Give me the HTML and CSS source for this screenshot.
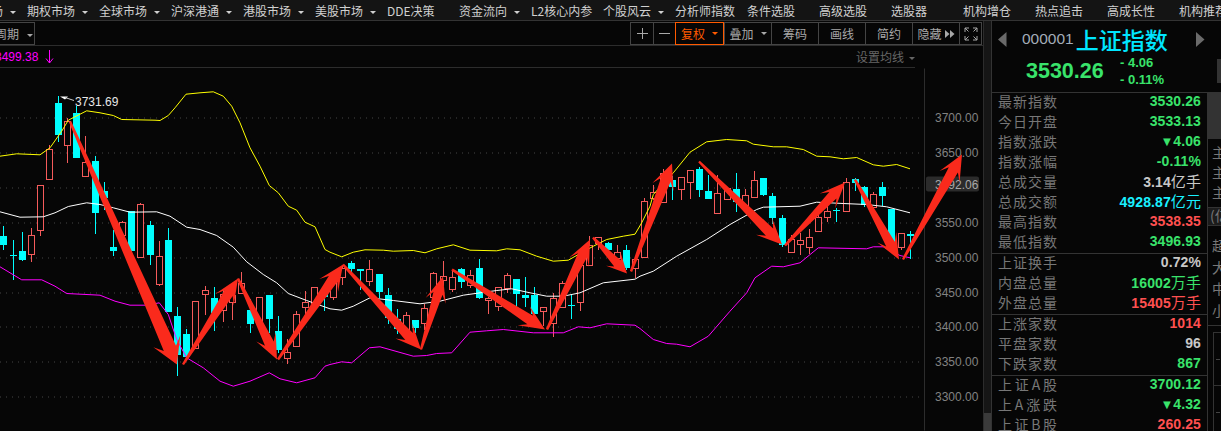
FILE: index.html
```html
<html>
<head>
  <title>上证指数</title>
  <link rel="stylesheet" href="styles.css">
</head>
<body>
  <nav class="topnav">
    <a class="nav-item">期货市场<i class="caret"></i></a>
    <a class="nav-item">期权市场<i class="caret"></i></a>
    <a class="nav-item">全球市场<i class="caret"></i></a>
    <a class="nav-item">沪深港通<i class="caret"></i></a>
    <a class="nav-item">港股市场<i class="caret"></i></a>
    <a class="nav-item">美股市场<i class="caret"></i></a>
    <a class="nav-item">DDE决策</a>
    <a class="nav-item">资金流向<i class="caret"></i></a>
    <a class="nav-item">L2核心内参</a>
    <a class="nav-item">个股风云<i class="caret"></i></a>
    <a class="nav-item">分析师指数</a>
    <a class="nav-item">条件选股</a>
    <a class="nav-item">高级选股</a>
    <a class="nav-item">选股器</a>
    <a class="nav-item">机构增仓</a>
    <a class="nav-item">热点追击</a>
    <a class="nav-item">高成长性</a>
    <a class="nav-item">机构推荐</a>
  </nav>

  <div class="main">
    <section class="chart-col">
      <div class="toolbar">
        <div class="period-btn">周期<i class="caret"></i></div>
        <div class="tool-group">
          <div class="tool tool-sm"><svg width="13" height="13" viewBox="0 0 13 13"><path d="M6.5 1v11M1 6.5h11" stroke="#a8a8a8" fill="none"/></svg></div>
          <div class="tool tool-sm"><svg width="13" height="13" viewBox="0 0 13 13"><path d="M1 6.5h11" stroke="#a8a8a8" fill="none"/></svg></div>
          <div class="tool tool-on">复权<i class="caret"></i></div>
          <div class="tool">叠加<i class="caret"></i></div>
          <div class="tool">筹码</div>
          <div class="tool">画线</div>
          <div class="tool">简约</div>
          <div class="tool">隐藏<svg class="tool-more" width="10" height="8" viewBox="0 0 10 8"><path d="M0 0l4.5 4L0 8zM5 0l4.5 4L5 8z" fill="#a8a8a8"/></svg></div>
          <div class="tool tool-fs"><svg width="14" height="14" viewBox="0 0 14 14"><path d="M1 5V1h4M9 1h4v4M13 9v4H9M5 13H1V9M1 1l3.500 3.500M13 1L9.500 4.500M13 13L9.500 9.500M1 13l3.500-3.500" stroke="#a8a8a8" fill="none"/></svg></div>
        </div>
      </div>
      <div class="info-row">
        <span class="ma-value">3499.38</span>
        <svg class="ma-arrow" width="9" height="14" viewBox="0 0 9 14"><path d="M4.500 0v13M1 8.500l3.500 4.500 3.500-4.500" stroke="#ff00ff" fill="none"/></svg>
        <span class="ma-set">设置均线<i class="caret"></i></span>
      </div>
      <svg id="chart" class="chart" viewBox="0 69 983 362"></svg>
    </section>

    <div class="scroll-track"><div class="scroll-thumb"></div></div>

    <section class="quote">
      <header class="quote-head">
        <div class="head-line">
          <svg class="head-arrow" width="9" height="15" viewBox="0 0 9 15"><path d="M8.500 0v15L0 7.500z" fill="#6a6a6a"/></svg>
          <span class="code">000001</span>
          <span class="name">上证指数</span>
          <svg class="head-arrow head-next" width="9" height="15" viewBox="0 0 9 15"><path d="M0 0v15l8.500-7.500z" fill="#6a6a6a"/></svg>
        </div>
        <div class="head-line2">
          <span class="price">3530.26</span>
          <div class="change">
            <span>- 4.06</span>
            <span>- 0.11%</span>
          </div>
        </div>
        <div class="head-thumb"></div>
      </header>

      <div class="quote-body">
        <div class="quote-table">
          <div class="group">
            <div class="row"><span class="lbl">最新指数</span><b class="green">3530.26</b></div>
            <div class="row"><span class="lbl">今日开盘</span><b class="green">3533.13</b></div>
            <div class="row"><span class="lbl">指数涨跌</span><b class="green"><small>▼</small>4.06</b></div>
            <div class="row"><span class="lbl">指数涨幅</span><b class="green">-0.11%</b></div>
            <div class="row"><span class="lbl">总成交量</span><b class="grey">3.14<em>亿手</em></b></div>
            <div class="row"><span class="lbl">总成交额</span><b class="cyan">4928.87<em>亿元</em></b></div>
            <div class="row"><span class="lbl">最高指数</span><b class="red">3538.35</b></div>
            <div class="row"><span class="lbl">最低指数</span><b class="green">3496.93</b></div>
          </div>
          <div class="group">
            <div class="row"><span class="lbl">上证换手</span><b class="grey">0.72%</b></div>
            <div class="row"><span class="lbl">内盘总量</span><b class="green">16002<em>万手</em></b></div>
            <div class="row"><span class="lbl">外盘总量</span><b class="red">15405<em>万手</em></b></div>
          </div>
          <div class="group">
            <div class="row"><span class="lbl">上涨家数</span><b class="red">1014</b></div>
            <div class="row"><span class="lbl">平盘家数</span><b class="grey">96</b></div>
            <div class="row"><span class="lbl">下跌家数</span><b class="green">867</b></div>
          </div>
          <div class="group">
            <div class="row"><span class="lbl">上证A股</span><b class="green">3700.12</b></div>
            <div class="row"><span class="lbl">上A涨跌</span><b class="green"><small>▼</small>4.32</b></div>
            <div class="row"><span class="lbl">上证B股</span><b class="red">260.25</b></div>
          </div>
        </div>

        <aside class="side">
          <div class="side-top"></div>
          <div class="side-list side-main">
            <span>主</span><span>主</span><span>主</span>
          </div>
          <div class="side-unit">(亿</div>
          <div class="side-list side-size">
            <span>超</span><span>大</span><span>中</span><span>小</span>
          </div>
          <div class="side-box">
            <div class="side-cell"><i></i></div>
            <div class="side-cell"><i></i></div>
          </div>
        </aside>
      </div>
    </section>
  </div>

  <script src="chart.js"></script>
</body>
</html>
```

FILE: styles.css
```css
html, body {
  margin: 0;
  padding: 0;
}

body {
  width: 1221px;
  height: 431px;
  overflow: hidden;
  background-color: #060606;
  color: #a8a8a8;
  font-family: "Noto Sans CJK SC", "Liberation Sans", sans-serif;
  font-size: 12px;
  display: flex;
  flex-direction: column;
}

.caret {
  display: inline-block;
  width: 0;
  height: 0;
  border-left: 3px solid transparent;
  border-right: 3px solid transparent;
  border-top: 3px solid currentColor;
  margin-left: 7px;
  vertical-align: 2px;
}

.topnav {
  display: flex;
  flex: none;
  height: 20px;
  margin-left: -45px;
  background-color: #141414;
  border-bottom: 1px solid #333;
  white-space: nowrap;
}

.nav-item {
  flex: none;
  width: 72px;
  line-height: 22px;
  color: #d0d0d0;
}

.main {
  flex: 1;
  display: flex;
  min-height: 0;
}

.chart-col {
  flex: none;
  width: 983px;
  display: flex;
  flex-direction: column;
  overflow: hidden;
}

.toolbar {
  flex: none;
  height: 25px;
  box-sizing: border-box;
  display: flex;
  justify-content: space-between;
  align-items: flex-start;
  padding-top: 1px;
  border-bottom: 1px solid #2c2c2c;
}

.period-btn {
  width: 40px;
  height: 23px;
  margin-left: -5px;
  box-sizing: border-box;
  border: 1px solid #444;
  border-left: none;
  line-height: 22px;
  white-space: nowrap;
}

.period-btn .caret {
  margin-left: 8px;
}

.tool-group {
  display: flex;
  height: 23px;
  margin-right: 1px;
  box-sizing: border-box;
  border: 1px solid #444;
}

.tool {
  width: 47px;
  box-sizing: border-box;
  border-left: 1px solid #444;
  display: flex;
  align-items: center;
  justify-content: center;
  white-space: nowrap;
}

.tool:first-child {
  border-left: none;
}

.tool-sm {
  width: 22px;
}

.tool-fs {
  width: 22px;
}

.tool-on {
  width: 49px;
  margin: -1px 0;
  border: 1px solid #ff5a00;
  color: #ff5a00;
  position: relative;
}

.tool-more {
  margin-left: 3px;
}

.info-row {
  flex: none;
  height: 22px;
  box-sizing: border-box;
  display: flex;
  align-items: center;
  width: 920px;
  margin-left: -5px;
  border-bottom: 1px solid #2c2c2c;
}

.ma-value {
  color: #ff00ff;
  font-family: "Liberation Sans", sans-serif;
}

.ma-arrow {
  margin-left: 7px;
}

.ma-set {
  margin-left: auto;
  color: #666;
}

.ma-set .caret {
  margin-left: 5px;
}

.chart {
  flex: 1;
  display: block;
  width: 983px;
  min-height: 0;
}

.chart text {
  font-family: "Liberation Sans", sans-serif;
  font-size: 12px;
}

.scroll-track {
  flex: none;
  width: 7px;
  background-color: #161616;
  border-left: 1px solid #2c2c2c;
  border-right: 1px solid #333;
  display: flex;
  flex-direction: column;
  justify-content: flex-end;
}

.scroll-thumb {
  height: 18px;
  background-color: #3a3a3a;
}

.quote {
  flex: 1;
  display: flex;
  flex-direction: column;
  min-width: 0;
}

.quote-head {
  flex: none;
  height: 72px;
  box-sizing: border-box;
  position: relative;
  border-bottom: 1px solid #333;
}

.head-line {
  display: flex;
  align-items: center;
  height: 33px;
  padding: 3px 0 0 6px;
  box-sizing: border-box;
}

.code {
  margin-left: 15px;
  font-family: "Liberation Sans", sans-serif;
  font-size: 15.500px;
  color: #a3acb8;
}

.name {
  margin-left: 2px;
  font-size: 23px;
  line-height: 30px;
  font-weight: 500;
  color: #00e6ff;
}

.head-next {
  margin-left: 28px;
}

.head-line2 {
  display: flex;
  align-items: center;
  padding-left: 34px;
}

.price {
  font-family: "Liberation Sans", sans-serif;
  font-weight: bold;
  font-size: 21.500px;
  color: #39e36b;
  width: 94px;
}

.change {
  display: flex;
  flex-direction: column;
  font-family: "Liberation Sans", sans-serif;
  font-weight: bold;
  font-size: 13px;
  line-height: 17px;
  color: #39e36b;
}

.head-thumb {
  position: absolute;
  right: 0;
  top: 38px;
  width: 4px;
  height: 24px;
  background-color: #333;
}

.quote-body {
  flex: 1;
  display: flex;
  min-height: 0;
}

.quote-table {
  flex: none;
  width: 216px;
  box-sizing: border-box;
  border-right: 1px solid #333;
}

.group {
  border-bottom: 1px solid #333;
}

.row {
  height: 20px;
  box-sizing: border-box;
  display: flex;
  align-items: center;
  justify-content: space-between;
  padding: 0 6px 4px 6px;
}

.lbl {
  width: 59px;
  font-size: 14px;
  line-height: 16px;
  color: #777;
  text-align-last: justify;
}

.row b {
  font-family: "Liberation Sans", sans-serif;
  font-size: 14px;
  line-height: 16px;
  letter-spacing: 0.1px;
}

.row em {
  font-family: "Noto Sans CJK SC", sans-serif;
  font-style: normal;
  font-weight: normal;
  font-size: 15px;
  line-height: 16px;
}

.row small {
  font-size: 13px;
  line-height: 14px;
}

.green { color: #39e36b; }
.red { color: #ff5050; }
.cyan { color: #19f0ff; }
.grey { color: #c8c8c8; }

.side {
  flex: 1;
  min-width: 0;
  overflow: hidden;
  display: flex;
  flex-direction: column;
  color: #777;
  font-size: 14px;
}

.side-top {
  flex: none;
  height: 45px;
  background-color: #333;
}

.side-list {
  display: flex;
  flex-direction: column;
  flex: none;
  padding-left: 4px;
  border-top: 1px solid #333;
}

.side-list span {
  line-height: 20px;
}

.side-main {
  height: 69px;
  padding-top: 3px;
  box-sizing: border-box;
}

.side-unit {
  flex: none;
  height: 17px;
  line-height: 15px;
  padding-left: 2px;
  background-color: #1c1c1c;
  border-top: 1px solid #333;
  border-bottom: 1px solid #333;
  white-space: nowrap;
}

.side-size {
  border-top: none;
  height: 100px;
  padding-top: 9px;
  box-sizing: border-box;
  border-bottom: 1px solid #333;
}

.side-size span {
  line-height: 21.500px;
}

.side-box {
  margin: 6px 0 0 5px;
  border-left: 1px solid #333;
  border-top: 1px solid #333;
}

.side-cell {
  height: 52px;
  border-bottom: 1px solid #333;
  display: flex;
  align-items: center;
  padding-left: 2px;
}

.side-cell i {
  display: block;
  width: 4px;
  height: 1px;
  background-color: #444;
}
```

FILE: chart.js
```js
// readings were taken off 3x crops, so rows are in crop units with the crop's offset
var SVG = "http://www.w3.org/2000/svg";
var chart = document.getElementById("chart");

function add(tag, attrs, text) {
  var el = document.createElementNS(SVG, tag);
  for (var k in attrs) el.setAttribute(k, attrs[k]);
  if (text) el.textContent = text;
  chart.appendChild(el);
  return el;
}

// [x, high, top, bottom, low, kind]
var candles = [
  [0, 90, [
    [9,410,438,465,482,"c"],[38,450,495,497,572,"c"],[65,427,483,510,515,"c"],[94,415,436,493,518,"r"],
    [121,285,286,421,440,"r"],[148,165,178,268,268,"r"],[175,18,39,135,158,"c"],[202,85,94,166,221,"r"],
    [229,50,69,203,203,"c"],[256,140,217,257,257,"r"],[286,198,213,369,434,"c"],[313,276,304,324,360,"c"],
    [340,420,471,483,500,"c"],[367,393,397,436,436,"r"],[394,363,363,483,505,"c"],[421,340,343,502,502,"r"],
    [451,393,405,494,527,"c"],[478,453,499,581,590,"r"],[505,414,450,665,665,"c"],[532,651,678,795,860,"c"],
    [559,717,732,800,805,"c"],[586,634,634,775,775,"r"],[616,590,601,613,675,"r"],[643,591,624,668,725,"c"],
    [670,600,613,661,697,"r"],[697,600,615,637,690,"r"],[724,548,580,608,608,"r"],[751,628,660,701,731,"c"],
    [778,622,622,700,700,"r"],[808,615,615,686,730,"c"],[835,678,723,780,790,"c"],[862,747,787,805,824,"r"],
    [889,664,673,769,769,"r"],[916,605,637,650,680,"r"],[943,592,592,640,640,"r"],[973,610,612,622,665,"c"]
  ]],
  [330, 130, [
    [10,430,440,500,510,"r"],[37,405,414,440,465,"r"],[64,395,400,417,440,"c"],[91,417,417,423,480,"c"],
    [118,390,418,452,468,"r"],[148,432,432,486,505,"c"],[175,474,495,563,582,"c"],[202,537,568,597,614,"c"],
    [229,548,556,598,600,"r"],[256,570,570,594,610,"c"],[283,522,535,578,600,"r"],[310,428,430,500,540,"r"],
    [340,393,439,451,470,"r"],[367,420,440,476,486,"r"],[394,414,418,456,474,"c"],[421,420,436,465,475,"r"],
    [448,387,414,503,508,"c"],[475,503,503,509,554,"r"],[505,472,472,527,543,"r"],[532,430,436,473,490,"r"],
    [559,447,447,492,535,"c"],[586,441,495,503,533,"c"],[613,471,495,552,553,"c"],[640,532,532,544,590,"r"],
    [670,490,504,578,622,"r"],[697,455,460,530,530,"r"],[724,492,525,527,567,"c"],[751,405,405,517,543,"r"],
    [778,320,345,404,404,"r"],[805,322,322,340,360,"r"],[835,338,338,360,360,"c"],[862,345,366,384,400,"r"],
    [889,345,360,415,420,"c"],[916,385,388,413,445,"r"],[943,205,214,380,380,"r"],[970,165,187,203,210,"r"]
  ]],
  [640, 130, [
    [70,118,130,215,215,"r"],[97,140,150,171,210,"c"],[124,142,142,176,212,"r"],[151,120,121,157,208,"r"],
    [178,112,117,179,203,"c"],[205,135,183,206,206,"c"],[232,135,190,248,250,"r"],[262,175,175,208,210,"r"],
    [289,129,177,217,248,"c"],[316,178,194,224,240,"r"],[343,124,151,200,205,"r"],[370,144,144,194,200,"c"],
    [397,190,198,263,282,"c"],[427,255,264,345,352,"c"],[454,315,328,367,367,"r"],[481,310,331,341,375,"r"],
    [508,298,322,352,372,"r"],[535,255,261,302,303,"r"],[562,225,244,260,278,"r"],[589,235,240,242,278,"c"],
    [619,145,157,242,245,"r"],[646,145,148,158,185,"c"],[673,168,171,225,233,"c"],[700,188,193,232,232,"r"],
    [727,156,171,197,228,"c"],[754,238,238,340,345,"c"],[784,310,310,350,360,"r"],[811,304,313,317,387,"c"]
  ]]
];

var lines = [
  ["#ffff00", [
    [0,90,[0,200,50,193,120,196,150,175,185,125,205,92,260,64,300,70,340,78,365,90,465,92,480,93,505,78,525,55,558,14,600,10,640,7,670,20,695,50,720,100,750,175,780,230,808,288,835,310,865,350,890,362,915,398,945,412,975,480]],
    [330,130,[0,368,35,382,70,368,105,361,160,362,190,365,250,363,285,370,320,358,370,346,420,362,500,364,530,358,570,361,620,380,670,395,715,392,745,375,790,350,830,330,880,320,915,314,935,280,960,230]],
    [640,130,[40,195,100,130,150,68,200,37,260,30,320,34,340,44,400,52,440,52,490,60,530,80,570,82,610,88,650,84,700,106,730,110,770,105,810,118]]
  ]],
  ["#ffffff", [
    [0,90,[0,367,30,375,60,383,130,382,165,370,205,351,260,340,300,345,340,355,390,368,470,367,510,380,560,413,600,420,650,438,700,473,740,517,790,555,830,580,865,612,920,633]],
    [330,130,[0,538,35,542,70,530,120,505,190,513,270,523,330,515,400,497,500,483,545,478,600,490,650,500,700,500,750,490,820,460,915,449]],
    [640,130,[0,440,40,425,110,380,200,330,270,285,350,240,370,233,480,230,530,218,610,222,680,225,740,232,810,250]]
  ]],
  ["#ff00ff", [
    [0,90,[0,532,30,550,65,571,125,571,165,590,200,612,300,617,345,635,390,647,440,647,478,640,505,675,530,750,560,805,610,835,660,875,700,890,750,875,808,850,840,868,890,880,945,865,975,830]],
    [330,130,[0,705,35,697,65,700,118,655,150,652,250,680,290,678,320,672,365,670,420,608,470,604,520,600,610,610,700,610,745,592,780,595,830,583,915,587]],
    [640,130,[0,597,40,630,80,642,110,644,150,652,205,620,270,545,320,490,345,445,395,410,430,412,480,400,535,355,680,358,700,352,730,352,760,368,780,378,810,385]]
  ]]
];

var arrows = [
  [70,122,177,365],[183,365,238,279],[238,279,277,360],[278,360,343,265],[343,265,421,350],
  [421,350,443,277],[452,270,545,330],[547,330,590,240],[593,238,627,274],[631,272,672,164],
  [699,162,782,245],[785,246,845,183],[855,180,899,260],[903,260,962,155]
];

// grid and axis
var prices = ["3700.00","3650.00",null,"3550.00","3500.00","3450.00","3400.00","3350.00","3300.00"];
prices.forEach(function (label, i) {
  var y = Math.round(118 + i * 34.9) + 0.5;
  add("line", {x1: 0, y1: y, x2: 929, y2: y, stroke: "#444", "stroke-dasharray": "1 5"});
  if (label) add("text", {x: 935, y: y + 4, fill: "#828282"}, label);
});
add("line", {x1: 924.5, y1: 69, x2: 924.5, y2: 431, stroke: "#2c2c2c"});

candles.forEach(function (seg) {
  seg[2].forEach(function (c) {
    var x = Math.round(seg[0] + c[0] / 3) + 0.5;
    var hi = seg[1] + c[1] / 3, top = Math.round(seg[1] + c[2] / 3);
    var bot = Math.round(seg[1] + c[3] / 3), lo = seg[1] + c[4] / 3;
    var color = c[5] == "c" ? "#00ffff" : "#f55b5b";
    var g = {stroke: color, "shape-rendering": "crispEdges"};
    add("path", Object.assign({d: "M" + x + " " + hi + "V" + top + "M" + x + " " + bot + "V" + lo}, g));
    if (c[5] == "c") {
      add("rect", {x: x - 3.5, y: top, width: 7, height: Math.max(bot - top, 1), fill: color, "shape-rendering": "crispEdges"});
    } else {
      add("rect", Object.assign({x: x - 3, y: top + 0.5, width: 6, height: Math.max(bot - top, 1), fill: "#060606"}, g));
    }
  });
});

lines.forEach(function (line) {
  var pts = [];
  line[1].forEach(function (seg) {
    for (var i = 0; i < seg[2].length; i += 2) {
      pts.push((seg[0] + seg[2][i] / 3).toFixed(1) + "," + (seg[1] + seg[2][i + 1] / 3).toFixed(1));
    }
  });
  add("polyline", {points: pts.join(" "), fill: "none", stroke: line[0], "stroke-width": 1});
});

// peak label
add("path", {d: "M60 97h8l-3 3z", fill: "#fff"});
add("path", {d: "M65 98L74 101", stroke: "#ccc", fill: "none"});
add("text", {x: 75, y: 106, fill: "#e8e8e8"}, "3731.69");

// last price tag sits under the drawn arrows
add("rect", {x: 926, y: 177, width: 53, height: 15, rx: 2, fill: "#2b2b2b"});
add("text", {x: 935, y: 189, fill: "#a8a8a8"}, "3592.06");

// hand-drawn arrows: narrow tail, widening shaft, swept-back barbs
arrows.forEach(function (a) {
  var dx = a[2] - a[0], dy = a[3] - a[1], len = Math.sqrt(dx * dx + dy * dy);
  var ux = dx / len, uy = dy / len, nx = -uy, ny = ux;
  var neck = 4 + len * 0.01, barb = neck * 2.2, tail = 1.2;
  var head = Math.min(22, len * 0.35);
  function p(along, side) {
    return (a[2] - ux * along + nx * side).toFixed(1) + "," + (a[3] - uy * along + ny * side).toFixed(1);
  }
  add("polygon", {
    points: [p(len, tail), p(head * 0.8, neck), p(head * 1.15, barb), a[2] + "," + a[3], p(head * 1.15, -barb), p(head * 0.8, -neck), p(len, -tail)].join(" "),
    fill: "#fa2a1c"
  });
});
```
